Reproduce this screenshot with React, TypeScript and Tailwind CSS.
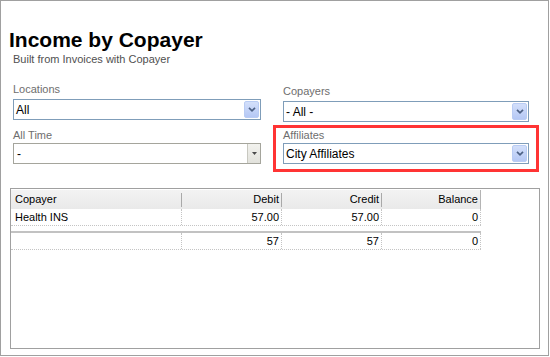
import React from 'react'

type Row = {
  balance: string
  copayer: string
  credit: string
  debit: string
}

const rows: Row[] = [
  { copayer: 'Health INS', debit: '57.00', credit: '57.00', balance: '0' }
]

const total: Row = { copayer: '', debit: '57', credit: '57', balance: '0' }

const Chevron = () => (
  <svg height="5" viewBox="0 0 8 5" width="8">
    <path
      d="M1 0.8 L4 3.8 L7 0.8"
      fill="none"
      stroke="#4d6185"
      strokeWidth="1.7"
    />
  </svg>
)

const Select = ({ value }: { value: string }) => (
  <div className="flex h-[21px] items-center border border-[#7f9db9] bg-white pl-[2px] pr-px">
    <span className="flex-1 text-[12px] leading-none text-black">{value}</span>
    <span className="flex h-[17px] w-[15px] items-center justify-center rounded-[2px] border border-[#b9ccf4] bg-gradient-to-b from-[#d3dffa] to-[#b5c8f5]">
      <Chevron />
    </span>
  </div>
)

const DisabledSelect = ({ value }: { value: string }) => (
  <div className="flex h-[21px] items-stretch border border-[#a5a59c] bg-white">
    <span className="flex flex-1 items-center pl-[3px] text-[12px] leading-none text-black">
      {value}
    </span>
    <span className="flex w-[13px] items-center justify-center border-l border-[#c8c8c0] bg-gradient-to-b from-[#f2f2ee] to-[#e2e2dc]">
      <svg height="3" viewBox="0 0 5 3" width="5">
        <path d="M0 0 H5 L2.5 3 Z" fill="#4a4a4a" />
      </svg>
    </span>
  </div>
)

const Label = ({ children, tight }: { children: string; tight?: boolean }) => (
  <div
    className={`h-[11px] text-[11px] leading-[11px] text-[#6e6e6e] ${tight ? 'mb-[2px]' : 'mb-[4px]'}`}>
    {children}
  </div>
)

const cols = 'grid grid-cols-[171px_100px_100px_99px]'

const DataRow = ({ row }: { row: Row }) => (
  <div className={`${cols} h-[17px] border-b border-dotted border-[#c4c4c4] text-[11px] leading-none text-black`}>
    <div className="flex items-center border-r border-dotted border-[#c4c4c4] pl-[4px]">
      {row.copayer}
    </div>
    <div className="flex items-center justify-end border-r border-dotted border-[#c4c4c4] pr-[2px]">
      {row.debit}
    </div>
    <div className="flex items-center justify-end border-r border-dotted border-[#c4c4c4] pr-[2px]">
      {row.credit}
    </div>
    <div className="flex items-center justify-end border-r border-dotted border-[#c4c4c4] pr-[2px]">
      {row.balance}
    </div>
  </div>
)

const HeaderCell = ({
  align,
  children,
  last
}: {
  align: 'left' | 'right'
  children: string
  last?: boolean
}) => (
  <div className="flex items-center">
    <span
      className={`flex-1 ${align === 'left' ? 'pl-[4px] text-left' : 'pr-[2px] text-right'}`}>
      {children}
    </span>
    {last ? (
      <span className="h-full w-px bg-[#b4b4b4]" />
    ) : (
      <span className="h-[14px] w-px bg-[#a9a9a9]" />
    )}
  </div>
)

export default function App() {
  return (
    <div className="h-[356px] w-[549px] border border-[#a0a0a0] bg-white font-['Liberation_Sans',Arial,sans-serif]">
      <h1 className="ml-[8px] mt-[28px] text-[21px] font-bold leading-[21px] text-black">
        Income by Copayer
      </h1>
      <p className="ml-[12px] mt-[4px] text-[11px] leading-[11px] text-[#505050]">
        Built from Invoices with Copayer
      </p>

      <div className="ml-[12px] mt-[19px] grid grid-cols-[248px_246px] gap-x-[22px] gap-y-[8px]">
        <div>
          <Label>Locations</Label>
          <Select value="All" />
        </div>
        <div className="pt-[2px]">
          <Label>Copayers</Label>
          <Select value="- All -" />
        </div>
        <div>
          <Label tight>All Time</Label>
          <DisabledSelect value="-" />
        </div>
        <div className="-mx-[10px] -mb-[8px] -mt-[5px] border-[3px] border-[#ff3434] px-[7px] pb-[5px] pt-[2px]">
          <Label tight>Affiliates</Label>
          <Select value="City Affiliates" />
        </div>
      </div>

      <div className="ml-[9px] mt-[24px] h-[161px] w-[530px] border border-[#a0a0a0] bg-white pt-px">
        <div className="w-[470px]">
          <div className={`${cols} h-[19px] bg-gradient-to-b from-[#f3f3f3] to-[#e9e9e9] text-[11px] leading-none text-black`}>
            <HeaderCell align="left">Copayer</HeaderCell>
            <HeaderCell align="right">Debit</HeaderCell>
            <HeaderCell align="right">Credit</HeaderCell>
            <HeaderCell align="right" last>
              Balance
            </HeaderCell>
          </div>
          {rows.map((row) => (
            <DataRow key={row.copayer} row={row} />
          ))}
          <div className="mt-[5px] border-t-2 border-[#c2c2c2]">
            <DataRow row={total} />
          </div>
        </div>
      </div>
    </div>
  )
}
